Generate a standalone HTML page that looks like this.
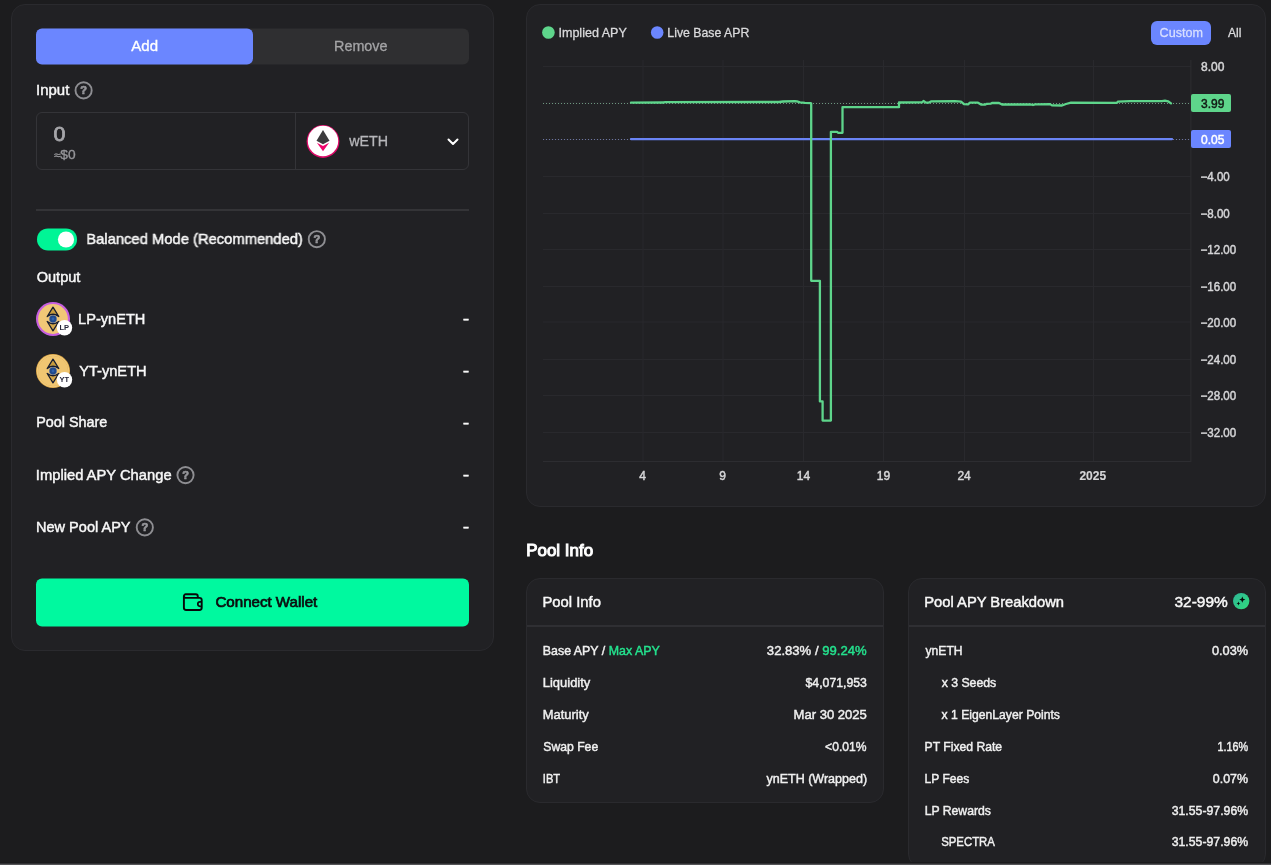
<!DOCTYPE html>
<html lang="en">
<head>
<meta charset="utf-8">
<title>Pool</title>
<style>
*{box-sizing:border-box;margin:0;padding:0}
html,body{width:1271px;height:865px;overflow:hidden;background:#1c1c1e}
body{position:relative;font-family:"Liberation Sans",Arial,sans-serif;color:#f2f2f2;font-size:15px}
.abs{position:absolute}
.card{position:absolute;background:#212124;border:1px solid #2a2a2e;border-radius:14px}
.t{position:absolute;white-space:nowrap;line-height:20px;height:20px}
.green{color:#24e28e;-webkit-text-stroke-color:#24e28e}
</style>
</head>
<body>
<div id="root" style="position:absolute;left:0;top:0;width:1271px;height:865px;will-change:transform">
<!-- LEFT CARD -->
<div class="card" style="left:11px;top:4px;width:483px;height:647px"></div>
<div class="abs" style="left:36px;top:28px;width:433px;height:36px;border-radius:6px;background:#2f2f31;transform:translateY(0.5px)"></div>
<div class="abs" style="left:36px;top:28px;width:217px;height:36px;border-radius:6px;background:#6b86ff;transform:translateY(0.5px)"></div>
<svg class="abs" style="left:73px;top:80px" width="22" height="22" viewBox="0 0 22 22"><circle cx="10.6" cy="10.4" r="8.1" fill="none" stroke="#8e8e92" stroke-width="1.9"/><text x="10.6" y="14.2" font-size="11" font-weight="bold" font-family="Liberation Sans, sans-serif" fill="#97979b" stroke="#97979b" stroke-width="0.7" text-anchor="middle">?</text></svg>
<div class="abs" style="left:36px;top:112px;width:433px;height:58px;border:1px solid #343438;border-radius:6px"></div>
<div class="abs" style="left:295px;top:112px;width:1px;height:58px;background:#343438"></div>
<svg class="abs" style="left:305px;top:123px" width="36" height="36" viewBox="0 0 36 36">
  <circle cx="18" cy="18.500" r="16.400" fill="#dc0a68"/>
  <circle cx="18" cy="18" r="15.2" fill="#ffffff"/>
  <path d="M18 7.100 L24.500 17.800 L18 21.300 L11.500 17.800 Z" fill="#3c3b3d"/>
  <path d="M11.900 19.700 L18 23 L24.100 19.700 L18 28.200 Z" fill="#f0046c"/>
</svg>
<svg class="abs" style="left:446.5px;top:136.6px" width="12" height="10" viewBox="0 0 12 10"><path d="M1.5 2.5 L6 7 L10.5 2.5" fill="none" stroke="#fff" stroke-width="2" stroke-linecap="round" stroke-linejoin="round"/></svg>
<div class="abs" style="left:36px;top:209px;width:433px;height:2px;background:#343437"></div>
<div class="abs" style="left:37px;top:228px;width:40px;height:22px;border-radius:11px;background:#00f596;transform:translateY(0.4px)"></div>
<svg class="abs" style="left:50px;top:226px" width="30" height="26" viewBox="0 0 30 26"><circle cx="16" cy="13.5" r="8.1" fill="#fff"/></svg>
<svg class="abs" style="left:306px;top:228px" width="22" height="22" viewBox="0 0 22 22"><circle cx="10.8" cy="11.2" r="8.1" fill="none" stroke="#8e8e92" stroke-width="1.9"/><text x="10.8" y="15.0" font-size="11" font-weight="bold" font-family="Liberation Sans, sans-serif" fill="#97979b" stroke="#97979b" stroke-width="0.7" text-anchor="middle">?</text></svg>
<svg class="abs" style="left:29.1px;top:294.6px" width="48" height="48" viewBox="0 0 48 48">
<circle cx="24" cy="24" r="17" fill="#c75fe0"/><circle cx="24" cy="24" r="14.9" fill="#f1c777"/>
<path d="M24 12.2 L29.8 21.5 Q24 17 18.2 21.5 Z" fill="#c79c3e" stroke="#171d30" stroke-width="1.3" stroke-linejoin="round"/>
<path d="M24 35.8 L29.8 26.5 Q24 31 18.2 26.5 Z" fill="#d2a64a" stroke="#171d30" stroke-width="1.3" stroke-linejoin="round"/>
<circle cx="24" cy="24" r="4.1" fill="#8f9299"/>
<circle cx="24" cy="24" r="3.4" fill="#214a8c"/>
<circle cx="24" cy="24" r="1.4" fill="#2f62ac"/>
<circle cx="35.500" cy="32.800" r="7.7" fill="#ffffff"/>
<text x="35.300" y="35.100" font-size="7.500" font-weight="bold" font-family="Liberation Sans, sans-serif" fill="#26263a" text-anchor="middle">LP</text>
</svg>
<svg class="abs" style="left:29.1px;top:346.6px" width="48" height="48" viewBox="0 0 48 48">
<circle cx="24" cy="24" r="17" fill="#dba648"/><circle cx="24" cy="24" r="16.2" fill="#f3cd7e"/><circle cx="24" cy="24" r="15" fill="none" stroke="#e0ae55" stroke-width="0.6"/><circle cx="24" cy="24" r="14.6" fill="#f0c672"/>
<path d="M24 12.2 L29.8 21.5 Q24 17 18.2 21.5 Z" fill="#c79c3e" stroke="#171d30" stroke-width="1.3" stroke-linejoin="round"/>
<path d="M24 35.8 L29.8 26.5 Q24 31 18.2 26.5 Z" fill="#d2a64a" stroke="#171d30" stroke-width="1.3" stroke-linejoin="round"/>
<circle cx="24" cy="24" r="4.1" fill="#8f9299"/>
<circle cx="24" cy="24" r="3.4" fill="#214a8c"/>
<circle cx="24" cy="24" r="1.4" fill="#2f62ac"/>
<circle cx="35.500" cy="32.800" r="7.7" fill="#ffffff"/>
<text x="35.300" y="35.100" font-size="7.500" font-weight="bold" font-family="Liberation Sans, sans-serif" fill="#26263a" text-anchor="middle">YT</text>
</svg>
<svg class="abs" style="left:174px;top:464px" width="22" height="22" viewBox="0 0 22 22"><circle cx="11.5" cy="11.1" r="8.1" fill="none" stroke="#8e8e92" stroke-width="1.9"/><text x="11.5" y="14.9" font-size="11" font-weight="bold" font-family="Liberation Sans, sans-serif" fill="#97979b" stroke="#97979b" stroke-width="0.7" text-anchor="middle">?</text></svg>
<svg class="abs" style="left:134px;top:517px" width="22" height="22" viewBox="0 0 22 22"><circle cx="10.8" cy="10.4" r="8.1" fill="none" stroke="#8e8e92" stroke-width="1.9"/><text x="10.8" y="14.2" font-size="11" font-weight="bold" font-family="Liberation Sans, sans-serif" fill="#97979b" stroke="#97979b" stroke-width="0.7" text-anchor="middle">?</text></svg>
<div class="abs" style="left:36px;top:578px;width:433px;height:48px;border-radius:6px;background:#00f99f;transform:translateY(0.5px)"></div>
<svg class="abs" style="left:182px;top:592px" width="22" height="20" viewBox="0 0 22 20"><path d="M3.700 2.300 H13.700 a2.100 2.100 0 0 1 2.100 2.100 V5.900 M3.700 2.300 a1.800 1.800 0 0 0 -1.800 1.800 V15.800 a2.200 2.200 0 0 0 2.200 2.200 H17.500 a2.200 2.200 0 0 0 2.200 -2.200 V8.100 a2.200 2.200 0 0 0 -2.200 -2.200 H3.700 a1.800 1.800 0 0 1 -1.800 -1.800" fill="none" stroke="#08080a" stroke-width="1.900" stroke-linejoin="round"/><path d="M19.700 9.900 H18 a2.200 2.200 0 0 0 0 4.400 H19.700" fill="none" stroke="#08080a" stroke-width="1.700"/></svg>

<!-- CHART CARD -->
<div class="card" style="left:526px;top:4px;width:740px;height:503px"></div>
<!--CHART-->
<svg class="abs" style="left:0;top:0" width="1271" height="520" viewBox="0 0 1271 520" font-family="Liberation Sans, sans-serif">
<rect x="543" y="66" width="648" height="1" fill="#29292d"/>
<rect x="543" y="102.5" width="648" height="1" fill="#29292d"/>
<rect x="543" y="139" width="648" height="1" fill="#29292d"/>
<rect x="543" y="176" width="648" height="1" fill="#29292d"/>
<rect x="543" y="213" width="648" height="1" fill="#29292d"/>
<rect x="543" y="249" width="648" height="1" fill="#29292d"/>
<rect x="543" y="286" width="648" height="1" fill="#29292d"/>
<rect x="543" y="321.5" width="648" height="1" fill="#29292d"/>
<rect x="543" y="359" width="648" height="1" fill="#29292d"/>
<rect x="543" y="395" width="648" height="1" fill="#29292d"/>
<rect x="543" y="432" width="648" height="1" fill="#29292d"/>
<rect x="642.5" y="60" width="1" height="401.5" fill="#29292d"/>
<rect x="722.5" y="60" width="1" height="401.5" fill="#29292d"/>
<rect x="803" y="60" width="1" height="401.5" fill="#29292d"/>
<rect x="883" y="60" width="1" height="401.5" fill="#29292d"/>
<rect x="964" y="60" width="1" height="401.5" fill="#29292d"/>
<rect x="1093" y="60" width="1" height="401.5" fill="#29292d"/>
<rect x="543" y="461" width="648" height="1" fill="#2d2d31"/>
<rect x="1190.4" y="60" width="1" height="402" fill="#2d2d31"/>
<line x1="543" y1="103.5" x2="1191" y2="103.5" stroke="#9fe3b8" stroke-width="1" stroke-dasharray="1 2" opacity="0.6"/>
<line x1="543" y1="139.5" x2="1191" y2="139.5" stroke="#9aa8f0" stroke-width="1" stroke-dasharray="1 2" opacity="0.6"/>
<path d="M631 139.1 H1172" stroke="#6a84f5" stroke-width="2.3" fill="none" stroke-linecap="round"/>
<path d="M631 102.6 L664 102.5 L665 102.1 L779 102.0 L783 101.5 L795 101.2 L797 101.4 L800 102.4 L805 102.9 L810.5 103.2 L811.2 103.4 L811.2 280.8 L819.9 280.8 L819.9 401.4 L822.6 401.4 L822.6 420.6 L830.9 420.6 L830.9 131.8 L837 131.8 L838 132.8 L842.5 132.8 L842.5 107.2 L899 107.2 L899 102.5 L922 102.4 L923.5 101.0 L926 102.6 L929 102.6 L931 101.4 L955 101.2 L961 101.6 L964 104.2 L968 104.3 L970 102.6 L978 102.7 L981 104.5 L985 104.6 L987 103.8 L991 103.6 L992 103.0 L999 102.9 L1002 104.5 L1031 104.5 L1033 105.0 L1035 104.3 L1050 104.1 L1052 105.4 L1062 105.5 L1066 104.0 L1071 102.7 L1117 102.8 L1118 101.6 L1130 101.2 L1162 101.1 L1165 100.7 L1168 101.3 L1171 103.4" stroke="#5ed58b" stroke-width="2.3" fill="none" stroke-linejoin="round" stroke-linecap="round"/>
<text x="1201" y="70.8" font-size="12" fill="#d6d6d8" stroke="#d6d6d8" stroke-width="0.45">8.00</text>
<text x="1200.6" y="180.8" textLength="29.2" lengthAdjust="spacingAndGlyphs" font-size="12" fill="#d6d6d8" stroke="#d6d6d8" stroke-width="0.45">−4.00</text>
<text x="1200.6" y="217.8" textLength="29.2" lengthAdjust="spacingAndGlyphs" font-size="12" fill="#d6d6d8" stroke="#d6d6d8" stroke-width="0.45">−8.00</text>
<text x="1200.6" y="253.8" textLength="35.6" lengthAdjust="spacingAndGlyphs" font-size="12" fill="#d6d6d8" stroke="#d6d6d8" stroke-width="0.45">−12.00</text>
<text x="1200.6" y="290.8" textLength="35.6" lengthAdjust="spacingAndGlyphs" font-size="12" fill="#d6d6d8" stroke="#d6d6d8" stroke-width="0.45">−16.00</text>
<text x="1200.6" y="326.8" textLength="35.6" lengthAdjust="spacingAndGlyphs" font-size="12" fill="#d6d6d8" stroke="#d6d6d8" stroke-width="0.45">−20.00</text>
<text x="1200.6" y="363.8" textLength="35.6" lengthAdjust="spacingAndGlyphs" font-size="12" fill="#d6d6d8" stroke="#d6d6d8" stroke-width="0.45">−24.00</text>
<text x="1200.6" y="399.8" textLength="35.6" lengthAdjust="spacingAndGlyphs" font-size="12" fill="#d6d6d8" stroke="#d6d6d8" stroke-width="0.45">−28.00</text>
<text x="1200.6" y="436.8" textLength="35.6" lengthAdjust="spacingAndGlyphs" font-size="12" fill="#d6d6d8" stroke="#d6d6d8" stroke-width="0.45">−32.00</text>
<rect x="1191" y="94" width="40" height="18" rx="2" fill="#5ed58b"/>
<text x="1201" y="107.6" font-size="12" fill="#121a15" stroke="#121a15" stroke-width="0.45">3.99</text>
<rect x="1191" y="130" width="40" height="18" rx="2" fill="#6b86ff"/>
<text x="1201" y="143.6" font-size="12" fill="#fff" stroke="#fff" stroke-width="0.45">0.05</text>
<text x="642.6" y="480.3" font-size="12" fill="#d6d6d8" stroke="#d6d6d8" stroke-width="0.45" text-anchor="middle">4</text>
<text x="722.7" y="480.3" font-size="12" fill="#d6d6d8" stroke="#d6d6d8" stroke-width="0.45" text-anchor="middle">9</text>
<text x="803.5" y="480.3" font-size="12" fill="#d6d6d8" stroke="#d6d6d8" stroke-width="0.45" text-anchor="middle">14</text>
<text x="883.5" y="480.3" font-size="12" fill="#d6d6d8" stroke="#d6d6d8" stroke-width="0.45" text-anchor="middle">19</text>
<text x="964.1" y="480.3" font-size="12" fill="#d6d6d8" stroke="#d6d6d8" stroke-width="0.45" text-anchor="middle">24</text>
<text x="1092.8" y="480.3" font-size="12" fill="#d6d6d8" stroke="#d6d6d8" stroke-width="0.15" text-anchor="middle" font-weight="bold">2025</text>
<circle cx="548.4" cy="32.5" r="6.3" fill="#5ed58b"/>
<circle cx="657.2" cy="32.5" r="6.3" fill="#6b86ff"/>
<rect x="1151" y="21" width="60" height="24" rx="6" fill="#6b86ff"/>
</svg>
<!--/CHART-->

<!-- POOL INFO -->
<div class="card" style="left:526px;top:578px;width:358px;height:225px"></div>
<div class="abs" style="left:527px;top:625px;width:356px;height:2px;background:#2f2f33"></div>
<div class="card" style="left:908px;top:578px;width:358px;height:290px"></div>
<div class="abs" style="left:909px;top:625px;width:356px;height:2px;background:#2f2f33"></div>
<svg class="abs" style="left:1231px;top:591px" width="20" height="20" viewBox="0 0 20 20"><defs><linearGradient id="sg" x1="0" y1="0" x2="1" y2="1"><stop offset="0" stop-color="#2eb596"/><stop offset="1" stop-color="#31dc7c"/></linearGradient></defs><circle cx="10.2" cy="10.1" r="8.2" fill="url(#sg)"/><path d="M11.300 5.500 L12.200 7.700 L14.400 8.600 L12.200 9.500 L11.300 11.700 L10.400 9.500 L8.200 8.600 L10.400 7.700 Z" fill="#060908"/><path d="M7.400 10.600 L8 11.900 L9.300 12.500 L8 13.100 L7.400 14.400 L6.800 13.100 L5.500 12.500 L6.800 11.900 Z" fill="#060908"/></svg>

<div class="t" id="add" style="left:131px;top:36px;font-size:15px;color:#ffffff;transform:translateX(0.32px) scaleX(1.0019);transform-origin:0 50%;-webkit-text-stroke:0.35px #ffffff">Add</div>
<div class="t" id="rem" style="left:334px;top:36px;font-size:15px;color:#a4a4a6;transform:translateX(0.00px) scaleX(0.9585);transform-origin:0 50%;-webkit-text-stroke:0.3px #a4a4a6">Remove</div>
<div class="t" id="inp" style="left:35px;top:80px;font-size:15px;color:#f8f8f8;transform:translateX(0.98px) scaleX(0.9984);transform-origin:0 50%;-webkit-text-stroke:0.45px #f8f8f8">Input</div>
<div class="t" id="zero" style="left:53px;top:124px;font-size:20.8px;color:#a6a6aa;transform:translateX(0.49px) scaleX(1.0326);transform-origin:0 50%;-webkit-text-stroke:0.8px #a6a6aa">0</div>
<div class="t" id="usd" style="left:53px;top:145px;font-size:13px;color:#96969a;transform:translateX(0.98px) scaleX(1.057);transform-origin:0 50%;-webkit-text-stroke:0.35px #96969a"><span style="font-size:11px;position:relative;top:-0.5px">≈</span>$0</div>
<div class="t" id="weth" style="left:349px;top:131px;font-size:14px;color:#b6b6ba;transform:translateX(0.25px) scaleX(1.0188);transform-origin:0 50%;-webkit-text-stroke:0.3px #b6b6ba">wETH</div>
<div class="t" id="bal" style="left:86px;top:229px;font-size:15px;color:#f8f8f8;transform:translateX(0.30px) scaleX(0.984);transform-origin:0 50%;-webkit-text-stroke:0.45px #f8f8f8">Balanced Mode (Recommended)</div>
<div class="t" id="out" style="left:36px;top:267px;font-size:15px;color:#f8f8f8;transform:translateX(0.65px) scaleX(0.9721);transform-origin:0 50%;-webkit-text-stroke:0.45px #f8f8f8">Output</div>
<div class="t" id="lp" style="left:78px;top:309px;font-size:15px;color:#f8f8f8;transform:translateX(0.09px) scaleX(0.9724);transform-origin:0 50%;-webkit-text-stroke:0.45px #f8f8f8">LP-ynETH</div>
<div class="t" id="yt" style="left:79px;top:361px;font-size:15px;color:#f8f8f8;transform:translateX(0.17px) scaleX(0.9751);transform-origin:0 50%;-webkit-text-stroke:0.45px #f8f8f8">YT-ynETH</div>
<div class="t" id="ps" style="left:36px;top:412px;font-size:15px;color:#f8f8f8;transform:translateX(0.16px) scaleX(0.9594);transform-origin:0 50%;-webkit-text-stroke:0.45px #f8f8f8">Pool Share</div>
<div class="t" id="iac" style="left:35px;top:465px;font-size:15px;color:#f8f8f8;transform:translateX(0.81px) scaleX(0.9829);transform-origin:0 50%;-webkit-text-stroke:0.45px #f8f8f8">Implied APY Change</div>
<div class="t" id="npa" style="left:36px;top:517px;font-size:15px;color:#f8f8f8;transform:translateX(0.00px) scaleX(0.9689);transform-origin:0 50%;-webkit-text-stroke:0.45px #f8f8f8">New Pool APY</div>
<div class="t" id="d0" style="left:463px;top:309px;font-size:15px;color:#f8f8f8;transform:translateX(0.04px) scaleX(1.2003);transform-origin:0 50%;-webkit-text-stroke:0.7px #f8f8f8">-</div>
<div class="t" id="d1" style="left:463px;top:361px;font-size:15px;color:#f8f8f8;transform:translateX(0.04px) scaleX(1.2003);transform-origin:0 50%;-webkit-text-stroke:0.7px #f8f8f8">-</div>
<div class="t" id="d2" style="left:463px;top:413px;font-size:15px;color:#f8f8f8;transform:translateX(0.04px) scaleX(1.2003);transform-origin:0 50%;-webkit-text-stroke:0.7px #f8f8f8">-</div>
<div class="t" id="d3" style="left:463px;top:465px;font-size:15px;color:#f8f8f8;transform:translateX(0.04px) scaleX(1.2003);transform-origin:0 50%;-webkit-text-stroke:0.7px #f8f8f8">-</div>
<div class="t" id="d4" style="left:463px;top:517px;font-size:15px;color:#f8f8f8;transform:translateX(0.04px) scaleX(1.2003);transform-origin:0 50%;-webkit-text-stroke:0.7px #f8f8f8">-</div>
<div class="t" id="cw" style="left:215px;top:592px;font-size:15px;color:#0c0c0e;transform:translateX(0.42px) scaleX(1.0069);transform-origin:0 50%;-webkit-text-stroke:0.7px #0c0c0e">Connect Wallet</div>
<div class="t" id="impl" style="left:558px;top:23px;font-size:13px;color:#dadadc;transform:translateX(0.43px) scaleX(0.9663);transform-origin:0 50%;-webkit-text-stroke:0.3px #dadadc">Implied APY</div>
<div class="t" id="live" style="left:667px;top:23px;font-size:13px;color:#dadadc;transform:translateX(0.33px) scaleX(0.9449);transform-origin:0 50%;-webkit-text-stroke:0.3px #dadadc">Live Base APR</div>
<div class="t" id="cust" style="left:1159px;top:23px;font-size:13px;color:#d8dfff;transform:translateX(0.57px) scaleX(0.9679);transform-origin:0 50%;-webkit-text-stroke:0.3px #d8dfff">Custom</div>
<div class="t" id="all" style="left:1227px;top:23px;font-size:13px;color:#dcdcde;transform:translateX(0.98px) scaleX(0.9322);transform-origin:0 50%;-webkit-text-stroke:0.3px #dcdcde">All</div>
<div class="t" id="pih" style="left:526px;top:541px;font-size:15.8px;color:#ffffff;transform:translateX(0.24px) scaleX(1.0715);transform-origin:0 50%;-webkit-text-stroke:0.95px #ffffff">Pool Info</div>
<div class="t" id="pi" style="left:542px;top:592px;font-size:15px;color:#f8f8f8;transform:translateX(0.48px) scaleX(0.9862);transform-origin:0 50%;-webkit-text-stroke:0.45px #f8f8f8">Pool Info</div>
<div class="t" id="a0l" style="left:542px;top:641px;font-size:13px;color:#f0f0f0;transform:translateX(0.81px) scaleX(0.9537);transform-origin:0 50%;-webkit-text-stroke:0.45px #f0f0f0">Base APY / <span class="green">Max APY</span></div>
<div class="t" id="a0v" style="left:766px;top:641px;font-size:13px;color:#f0f0f0;transform:translateX(0.86px) scaleX(1.0071);transform-origin:0 50%;-webkit-text-stroke:0.45px #f0f0f0">32.83% / <span class="green">99.24%</span></div>
<div class="t" id="a1l" style="left:542px;top:673px;font-size:13px;color:#f0f0f0;transform:translateX(0.78px) scaleX(0.9957);transform-origin:0 50%;-webkit-text-stroke:0.45px #f0f0f0">Liquidity</div>
<div class="t" id="a1v" style="left:805px;top:673px;font-size:13px;color:#f0f0f0;transform:translateX(0.52px) scaleX(0.943);transform-origin:0 50%;-webkit-text-stroke:0.45px #f0f0f0">$4,071,953</div>
<div class="t" id="a2l" style="left:542px;top:705px;font-size:13px;color:#f0f0f0;transform:translateX(0.78px) scaleX(0.9956);transform-origin:0 50%;-webkit-text-stroke:0.45px #f0f0f0">Maturity</div>
<div class="t" id="a2v" style="left:793px;top:705px;font-size:13px;color:#f0f0f0;transform:translateX(0.54px) scaleX(1.0049);transform-origin:0 50%;-webkit-text-stroke:0.45px #f0f0f0">Mar 30 2025</div>
<div class="t" id="a3l" style="left:543px;top:737px;font-size:13px;color:#f0f0f0;transform:translateX(0.31px) scaleX(0.9371);transform-origin:0 50%;-webkit-text-stroke:0.45px #f0f0f0">Swap Fee</div>
<div class="t" id="a3v" style="left:825px;top:737px;font-size:13px;color:#f0f0f0;transform:translateX(0.11px) scaleX(0.9306);transform-origin:0 50%;-webkit-text-stroke:0.45px #f0f0f0">&lt;0.01%</div>
<div class="t" id="a4l" style="left:542px;top:769px;font-size:13px;color:#f0f0f0;transform:translateX(0.78px) scaleX(0.8598);transform-origin:0 50%;-webkit-text-stroke:0.45px #f0f0f0">IBT</div>
<div class="t" id="a4v" style="left:766px;top:769px;font-size:13px;color:#f0f0f0;transform:translateX(0.45px) scaleX(0.9631);transform-origin:0 50%;-webkit-text-stroke:0.45px #f0f0f0">ynETH (Wrapped)</div>
<div class="t" id="pab" style="left:924px;top:592px;font-size:15px;color:#f8f8f8;transform:translateX(0.30px) scaleX(0.982);transform-origin:0 50%;-webkit-text-stroke:0.45px #f8f8f8">Pool APY Breakdown</div>
<div class="t" id="pct" style="left:1174px;top:592px;font-size:15px;color:#f8f8f8;transform:translateX(0.50px) scaleX(1.0303);transform-origin:0 50%;-webkit-text-stroke:0.45px #f8f8f8">32-99%</div>
<div class="t" id="b0l" style="left:925px;top:641px;font-size:13px;color:#f0f0f0;transform:translateX(0.53px) scaleX(0.9312);transform-origin:0 50%;-webkit-text-stroke:0.45px #f0f0f0">ynETH</div>
<div class="t" id="b0v" style="left:1211px;top:641px;font-size:13px;color:#f0f0f0;transform:translateX(0.93px) scaleX(0.9821);transform-origin:0 50%;-webkit-text-stroke:0.45px #f0f0f0">0.03%</div>
<div class="t" id="b1l" style="left:941px;top:673px;font-size:13px;color:#f0f0f0;transform:translateX(0.64px) scaleX(0.9446);transform-origin:0 50%;-webkit-text-stroke:0.45px #f0f0f0">x 3 Seeds</div>
<div class="t" id="b2l" style="left:941px;top:705px;font-size:13px;color:#f0f0f0;transform:translateX(0.58px) scaleX(0.936);transform-origin:0 50%;-webkit-text-stroke:0.45px #f0f0f0">x 1 EigenLayer Points</div>
<div class="t" id="b3l" style="left:924px;top:737px;font-size:13px;color:#f0f0f0;transform:translateX(0.53px) scaleX(0.9364);transform-origin:0 50%;-webkit-text-stroke:0.45px #f0f0f0">PT Fixed Rate</div>
<div class="t" id="b3v" style="left:1217px;top:737px;font-size:13px;color:#f0f0f0;transform:translateX(0.46px) scaleX(0.8306);transform-origin:0 50%;-webkit-text-stroke:0.45px #f0f0f0">1.16%</div>
<div class="t" id="b4l" style="left:924px;top:769px;font-size:13px;color:#f0f0f0;transform:translateX(0.53px) scaleX(0.927);transform-origin:0 50%;-webkit-text-stroke:0.45px #f0f0f0">LP Fees</div>
<div class="t" id="b4v" style="left:1212px;top:769px;font-size:13px;color:#f0f0f0;transform:translateX(0.82px) scaleX(0.9562);transform-origin:0 50%;-webkit-text-stroke:0.45px #f0f0f0">0.07%</div>
<div class="t" id="b5l" style="left:924px;top:801px;font-size:13px;color:#f0f0f0;transform:translateX(0.63px) scaleX(0.9391);transform-origin:0 50%;-webkit-text-stroke:0.45px #f0f0f0">LP Rewards</div>
<div class="t" id="b5v" style="left:1171px;top:801px;font-size:13px;color:#f0f0f0;transform:translateX(0.73px) scaleX(0.9436);transform-origin:0 50%;-webkit-text-stroke:0.45px #f0f0f0">31.55-97.96%</div>
<div class="t" id="b6l" style="left:941px;top:832px;font-size:13px;color:#f0f0f0;transform:translateX(0.19px) scaleX(0.8751);transform-origin:0 50%;-webkit-text-stroke:0.45px #f0f0f0">SPECTRA</div>
<div class="t" id="b6v" style="left:1171px;top:832px;font-size:13px;color:#f0f0f0;transform:translateX(0.73px) scaleX(0.9436);transform-origin:0 50%;-webkit-text-stroke:0.45px #f0f0f0">31.55-97.96%</div>
<div class="abs" style="left:0;top:862px;width:1271px;height:1px;background:#1a1a1c"></div>
<div class="abs" style="left:0;top:863px;width:1271px;height:1px;background:#2f2f32"></div>
<div class="abs" style="left:0;top:864px;width:1271px;height:1px;background:#545457"></div>
</div>
</body>
</html>
